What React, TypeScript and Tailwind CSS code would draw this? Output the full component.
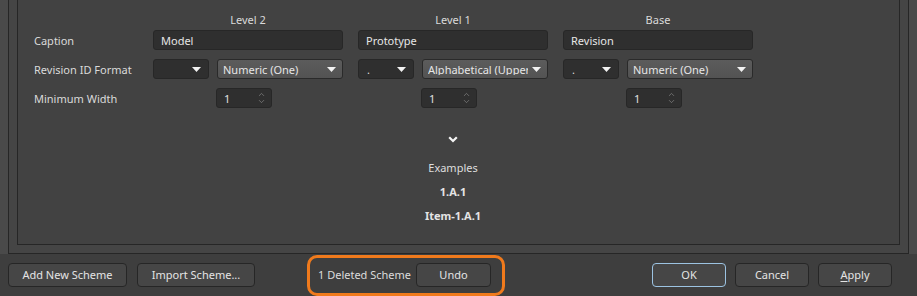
import { ChevronDown, ChevronUp } from "lucide-react"

const font = { fontFamily: '"Noto Sans", "Open Sans", sans-serif' }

function Caret() {
  return (
    <svg width="9" height="5" viewBox="0 0 9 5" className="shrink-0">
      <path d="M0 0 L9 0 L4.5 5 Z" fill="#f2f2f2" />
    </svg>
  )
}

function SmallSelect({ value }: { value: string }) {
  return (
    <div className="flex h-5 w-[56px] items-center justify-between rounded-[3px] border border-[#272727] bg-[#2f2f2f] pl-[8px] pr-[7px] text-[11px] leading-none text-[#dcdcdc]">
      <span>{value}</span>
      <Caret />
    </div>
  )
}

function BigSelect({ value, clip }: { value: string; clip?: boolean }) {
  return (
    <div className="flex h-5 w-[126px] items-center justify-between gap-[4px] rounded-[3px] border border-[#2a2a2a] bg-gradient-to-b from-[#5c5c5c] to-[#535353] pl-[5px] pr-[6px] text-[11px] leading-none text-[#e6e6e6]">
      <span className={clip ? "overflow-hidden whitespace-nowrap" : "whitespace-nowrap"}>{value}</span>
      <Caret />
    </div>
  )
}

function Spinner() {
  return (
    <div className="ml-[63px] flex h-5 w-[56px] items-center justify-between rounded-[3px] border border-[#272727] bg-[#2f2f2f] pl-[7px] pr-[5px] text-[11px] leading-none text-[#e0e0e0]">
      <span>1</span>
      <div className="flex flex-col items-center text-[#a0a0a0]">
        <ChevronUp size={9} strokeWidth={1.4} className="-mb-[1px]" />
        <ChevronDown size={9} strokeWidth={1.4} className="-mt-[1px]" />
      </div>
    </div>
  )
}

function Field({ value }: { value: string }) {
  return (
    <div className="flex h-5 w-[190px] items-center rounded-[3px] border border-[#272727] bg-[#2f2f2f] px-[7px] text-[11px] leading-none text-[#e6e6e6]">
      {value}
    </div>
  )
}

function Btn({ label, w, ok }: { label: React.ReactNode; w: string; ok?: boolean }) {
  return (
    <div
      className={`flex h-6 items-center justify-center rounded-[4px] border bg-[#464646] text-[11px] text-[#e4e4e4] ${w} ${
        ok ? "border-[#9cc3e2]" : "border-[#262626]"
      }`}
    >
      {label}
    </div>
  )
}

const levels = [
  { name: "Level 2", caption: "Model", sep: "", fmt: "Numeric (One)", clip: false },
  { name: "Level 1", caption: "Prototype", sep: ".", fmt: "Alphabetical (Upper", clip: true },
  { name: "Base", caption: "Revision", sep: ".", fmt: "Numeric (One)", clip: false },
]

export default function App() {
  return (
    <div className="flex h-[296px] w-[917px] flex-col overflow-hidden bg-[#3e3e3e] select-none" style={font}>
      {/* Top panels */}
      <div className="flex h-[254px] shrink-0">
        <div className="w-[8px] shrink-0 bg-[#4a4a4a]" />
        <div className="flex flex-1 border-x border-b border-[#262626] bg-[#454545] pb-[8px] pl-[8px] pr-[8px]">
          <div className="flex-1 border-x border-b border-[#262626] bg-[#424242] pl-[16px] pt-[13px]">
            <div className="grid grid-cols-[104px_190px_190px_190px] gap-x-[15px] gap-y-[9px]">
              <div className="-mb-[6px] h-[14px]" />
              {levels.map((l) => (
                <div key={l.name} className="-mb-[6px] h-[14px] text-center text-[11px] leading-[14px] text-[#dadada]">
                  {l.name}
                </div>
              ))}

              <div className="flex h-5 items-center text-[11px] leading-none text-[#dadada]">Caption</div>
              {levels.map((l) => (
                <Field key={l.name} value={l.caption} />
              ))}

              <div className="flex h-5 items-center text-[11px] leading-none text-[#dadada]">Revision ID Format</div>
              {levels.map((l) => (
                <div key={l.name} className="flex h-5 gap-[8px]">
                  <SmallSelect value={l.sep} />
                  <BigSelect value={l.fmt} clip={l.clip} />
                </div>
              ))}

              <div className="flex h-5 items-center text-[11px] leading-none text-[#dadada]">Minimum Width</div>
              {levels.map((l) => (
                <Spinner key={l.name} />
              ))}

              <div className="col-start-3 mt-[19px] flex flex-col items-center">
                <svg width="10" height="7" viewBox="0 0 10 7">
                  <path d="M1.2 1.2 L5 5 L8.8 1.2" stroke="#f4f4f4" strokeWidth="2.2" fill="none" />
                </svg>
                <div className="mt-[18px] text-[11px] leading-[14px] text-[#dedede]">Examples</div>
                <div className="mt-[10px] text-[11px] font-bold leading-[14px] text-[#e4e4e4]">1.A.1</div>
                <div className="mt-[10px] text-[11px] font-bold leading-[14px] text-[#e4e4e4]">Item-1.A.1</div>
              </div>
            </div>
          </div>
        </div>
        <div className="w-[8px] shrink-0 bg-[#4a4a4a]" />
      </div>

      {/* Button bar */}
      <div className="flex flex-1 items-center pl-[8px] pr-[25px]">
        <Btn label="Add New Scheme" w="w-[119px]" />
        <div className="ml-[10px]">
          <Btn label="Import Scheme..." w="w-[118px]" />
        </div>
        <div className="ml-[52px] flex h-[41px] w-[198px] items-center rounded-[10px] border-[3px] border-[#f07a1c] pl-[8px] pr-[11px]">
          <span className="text-[11px] text-[#dcdcdc]">1 Deleted Scheme</span>
          <div className="ml-auto">
            <Btn label="Undo" w="w-[75px]" />
          </div>
        </div>
        <div className="ml-auto flex gap-[9px]">
          <Btn label="OK" w="w-[74px]" ok />
          <Btn label="Cancel" w="w-[74px]" />
          <Btn
            label={
              <span>
                <span className="underline underline-offset-2">A</span>pply
              </span>
            }
            w="w-[74px]"
          />
        </div>
      </div>
    </div>
  )
}
